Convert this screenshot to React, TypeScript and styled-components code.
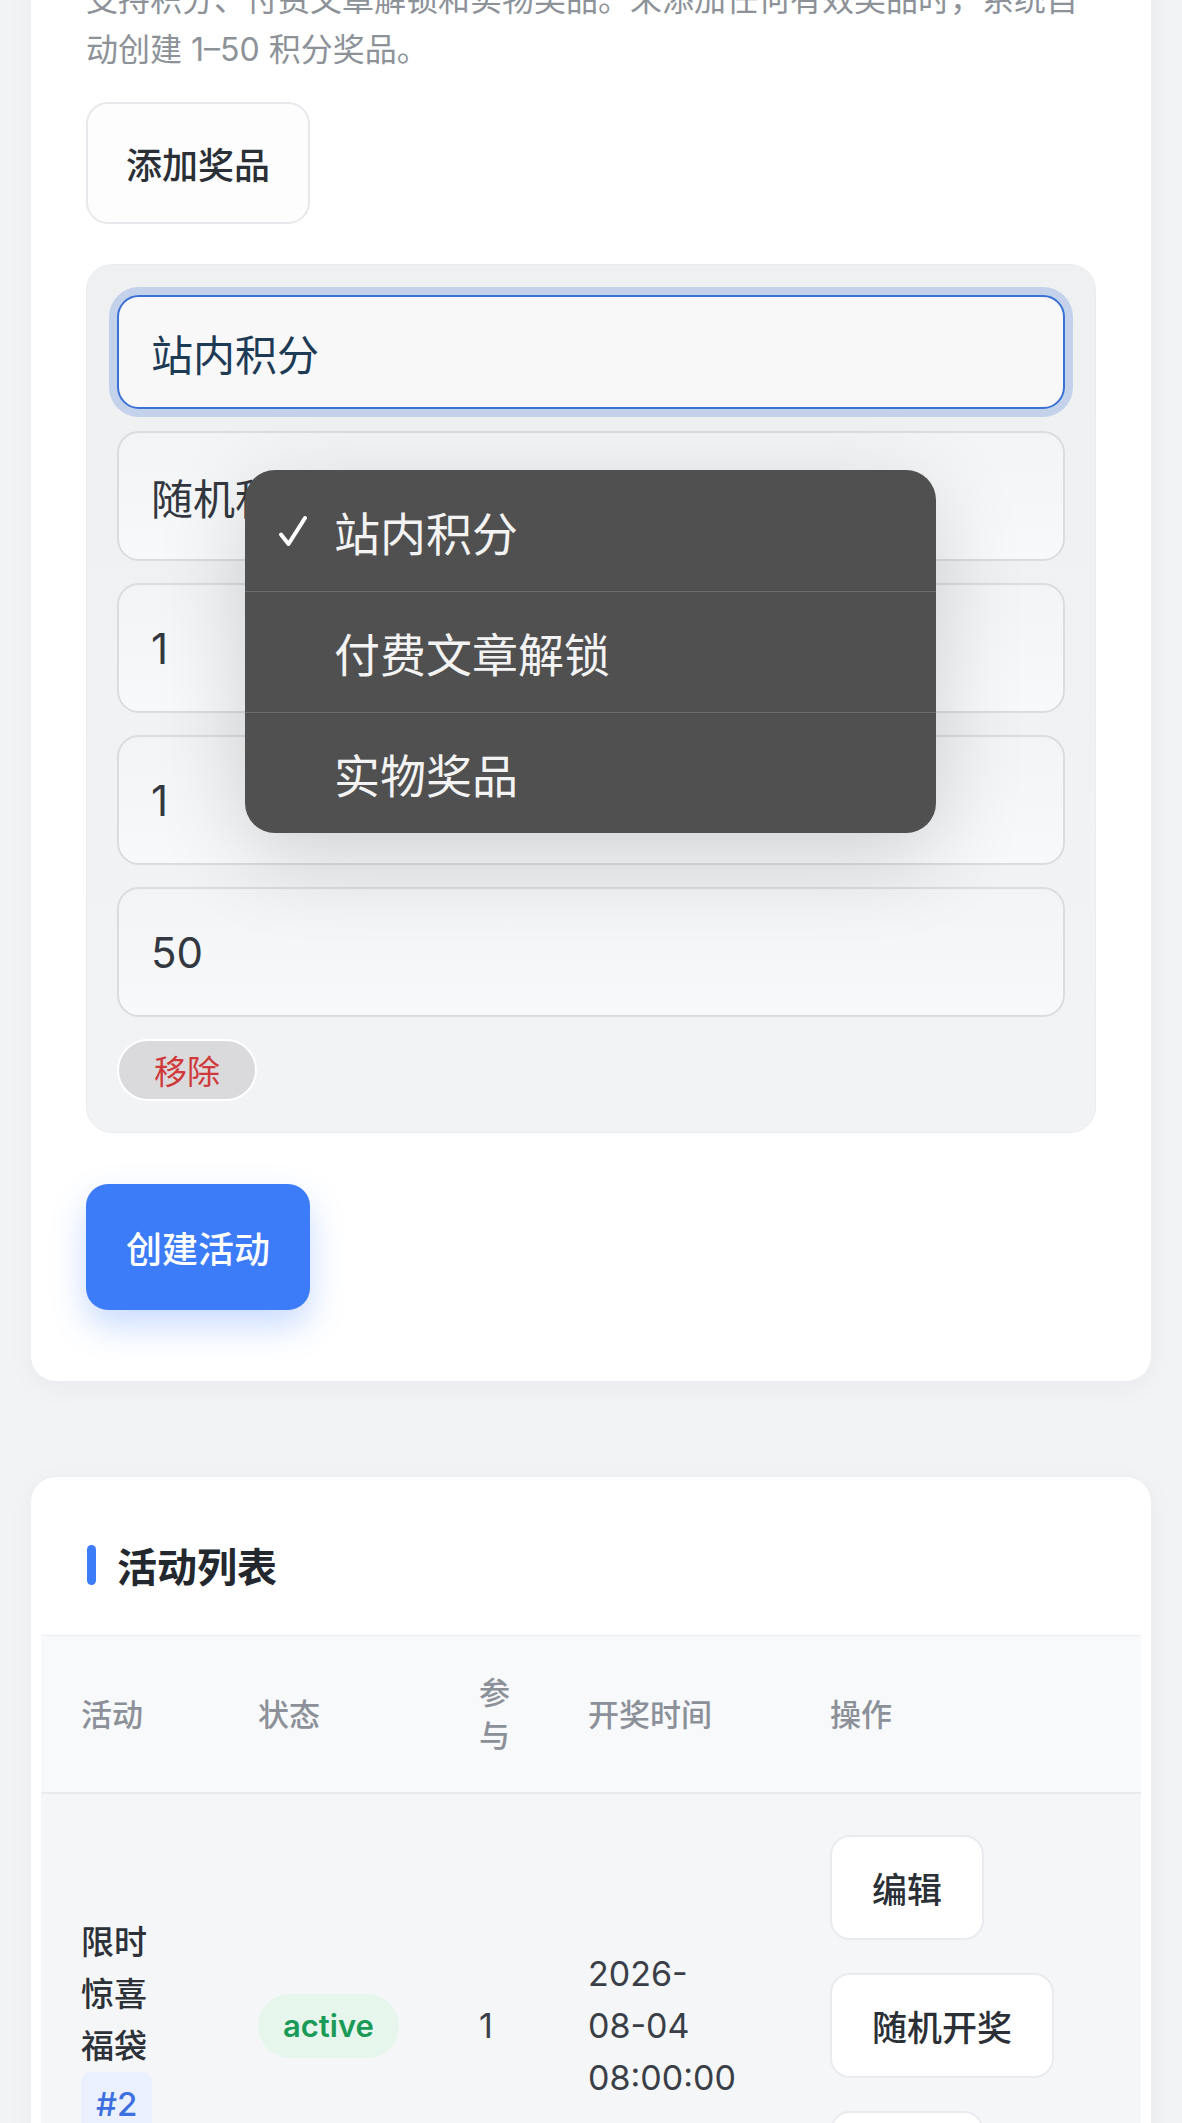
import React from "react";
import styled, { createGlobalStyle } from "styled-components";

const GlobalStyle = createGlobalStyle`
  html, body {
    margin: 0;
    padding: 0;
    background: #f2f3f5;
  }
  body {
    font-family: "Inter", "Noto Sans CJK SC", sans-serif;
    color: #2b2f36;
  }
  * {
    box-sizing: border-box;
  }
`;

const Page = styled.div`
  padding: 0 30px 60px;
  overflow: hidden;
`;

const Card = styled.section<{ $pullUp?: number }>`
  background: #ffffff;
  border-radius: 26px;
  border: 1px solid #eceef1;
  box-shadow: 0 6px 28px rgba(15, 23, 42, 0.04);
  margin-top: ${(p) => (p.$pullUp ? `-${p.$pullUp}px` : "0")};

  & + & {
    margin-top: 94px;
  }
`;

const FormBody = styled.div`
  padding: 55px 55px 71px;
`;

const Description = styled.p`
  margin: 0;
  font-size: 32px;
  line-height: 50px;
  color: #8d9299;
`;

const GhostButton = styled.button`
  display: inline-flex;
  align-items: center;
  justify-content: center;
  height: 122px;
  padding: 0 38px;
  border: 2px solid #e6e8eb;
  border-radius: 22px;
  background: #fdfdfd;
  font-family: inherit;
  font-size: 36px;
  font-weight: 500;
  color: #2b2f36;
`;

const AddRow = styled.div`
  margin-top: 27px;
`;

const PrizePanel = styled.div`
  position: relative;
  margin-top: 40px;
  display: flex;
  flex-direction: column;
  gap: 22px;
  padding: 30px 30px 31px;
  border: 1px solid #eaecef;
  border-radius: 26px;
  background: linear-gradient(180deg, #eef0f2 0%, #f2f3f5 100%);
`;

const SelectBox = styled.div`
  display: flex;
  align-items: center;
  height: 114px;
  padding: 0 32px;
  border: 2px solid #3b70d4;
  border-radius: 22px;
  background: #f8f8f9;
  box-shadow: 0 0 0 8px rgba(59, 112, 212, 0.24);
  font-size: 42px;
  color: #1e3b56;
`;

const Field = styled.input`
  width: 100%;
  height: 130px;
  padding: 0 32px;
  border: 2px solid #d9dce0;
  border-radius: 22px;
  background: linear-gradient(180deg, #f3f4f5 0%, #f8f9fa 100%);
  font-family: inherit;
  font-size: 42px;
  color: #333840;
  outline: none;
`;

const RemoveButton = styled.button`
  align-self: flex-start;
  height: 62px;
  padding: 0 35px;
  border: 2px solid #ffffff;
  border-radius: 31px;
  background: #dadadc;
  font-family: inherit;
  font-size: 33px;
  color: #d0383a;
`;

const Dropdown = styled.ul`
  position: absolute;
  left: 158px;
  top: 205px;
  width: 691px;
  margin: 0;
  padding: 0;
  list-style: none;
  background: #505050;
  border-radius: 30px;
  overflow: hidden;
  box-shadow: 0 24px 90px rgba(0, 0, 0, 0.16);
`;

const DropdownItem = styled.li`
  display: flex;
  align-items: center;
  height: 121px;
  padding-left: 33px;
  font-size: 46px;
  color: #f3f3f3;

  & + & {
    border-top: 1px solid #6c6c6c;
  }
`;

const CheckSlot = styled.span`
  display: inline-flex;
  align-items: center;
  width: 56px;
  height: 40px;
`;

const PrimaryButton = styled.button`
  display: inline-flex;
  align-items: center;
  justify-content: center;
  height: 126px;
  margin-top: 51px;
  padding: 0 40px;
  border: none;
  border-radius: 22px;
  background: #3d7cf8;
  box-shadow: 0 16px 34px rgba(61, 124, 248, 0.28);
  font-family: inherit;
  font-size: 36px;
  font-weight: 500;
  color: #ffffff;
`;

const ListBody = styled.div`
  padding: 60px 56px 0;
`;

const SectionTitle = styled.h2`
  display: flex;
  align-items: center;
  gap: 21px;
  margin: 0;
  height: 56px;
  font-size: 40px;
  font-weight: 600;
  color: #23272e;

  &::before {
    content: "";
    width: 9px;
    height: 40px;
    border-radius: 5px;
    background: #3d7cf8;
  }
`;

const TableWrap = styled.div`
  margin: 42px -46px 0;
`;

const Table = styled.table`
  width: 100%;
  table-layout: fixed;
  border-collapse: collapse;
`;

const Col = styled.col<{ $w?: number }>`
  width: ${(p) => (p.$w ? `${p.$w}px` : "auto")};
`;

const Th = styled.th`
  padding: 35px 36px 35px 40px;
  background: #f8f9fb;
  border-top: 1px solid #eceef1;
  border-bottom: 2px solid #e8eaed;
  text-align: left;
  font-size: 31px;
  font-weight: 500;
  line-height: 43px;
  color: #8b9099;
`;

const Td = styled.td`
  padding: 41px 40px;
  background: #f5f6f8;
  vertical-align: middle;
  font-size: 34px;
  line-height: 52px;
  color: #3a3f47;
`;

const Name = styled.span`
  font-size: 33px;
  font-weight: 500;
  color: #2d3138;
`;

const IdTag = styled.span`
  display: inline-block;
  padding: 4px 15px;
  border-radius: 10px;
  background: #eaf0fe;
  font-size: 33px;
  font-weight: 500;
  line-height: 56px;
  color: #3d6fe0;
`;

const NoWrap = styled.span`
  white-space: nowrap;
`;

const StatusBadge = styled.span`
  display: inline-flex;
  align-items: center;
  height: 64px;
  padding: 0 25px;
  border-radius: 32px;
  background: #e7f6ec;
  font-size: 31px;
  font-weight: 600;
  color: #1a9a57;
`;

const Actions = styled.div`
  display: flex;
  flex-direction: column;
  align-items: flex-start;
  gap: 33px;
`;

const RowButton = styled.button`
  height: 105px;
  padding: 0 40px;
  border: 2px solid #e9ebee;
  border-radius: 20px;
  background: #ffffff;
  font-family: inherit;
  font-size: 35px;
  font-weight: 500;
  color: #2b2f36;
`;

const prizeTypes = ["站内积分", "付费文章解锁", "实物奖品"];

function CheckMark() {
  return (
    <svg width="30" height="32" viewBox="0 0 30 32" fill="none">
      <path
        d="M3 19.5 L10.5 29 L27 3"
        stroke="#ffffff"
        strokeWidth="4"
        strokeLinecap="round"
        strokeLinejoin="round"
      />
    </svg>
  );
}

export default function App() {
  return (
    <>
      <GlobalStyle />
      <Page>
        <Card $pullUp={81}>
          <FormBody>
            <Description>
              支持积分、付费文章解锁和实物奖品。未添加任何有效奖品时，系统自动创建 1–50 积分奖品。
            </Description>
            <AddRow>
              <GhostButton>添加奖品</GhostButton>
            </AddRow>
            <PrizePanel>
              <SelectBox>站内积分</SelectBox>
              <Field readOnly value="随机积分" />
              <Field readOnly value="1" />
              <Field readOnly value="1" />
              <Field readOnly value="50" />
              <RemoveButton>移除</RemoveButton>
              <Dropdown>
                {prizeTypes.map((t, i) => (
                  <DropdownItem key={t}>
                    <CheckSlot>{i === 0 && <CheckMark />}</CheckSlot>
                    {t}
                  </DropdownItem>
                ))}
              </Dropdown>
            </PrizePanel>
            <PrimaryButton>创建活动</PrimaryButton>
          </FormBody>
        </Card>

        <Card>
          <ListBody>
            <SectionTitle>活动列表</SectionTitle>
            <TableWrap>
              <Table>
                <colgroup>
                  <Col $w={177} />
                  <Col $w={221} />
                  <Col $w={109} />
                  <Col $w={242} />
                  <Col />
                </colgroup>
                <thead>
                  <tr>
                    <Th>活动</Th>
                    <Th>状态</Th>
                    <Th>参与</Th>
                    <Th>开奖时间</Th>
                    <Th>操作</Th>
                  </tr>
                </thead>
                <tbody>
                  <tr>
                    <Td>
                      <Name>限时惊喜福袋</Name> <IdTag>#2</IdTag>
                    </Td>
                    <Td>
                      <StatusBadge>active</StatusBadge>
                    </Td>
                    <Td>1</Td>
                    <Td>
                      <NoWrap>2026-</NoWrap>
                      <wbr />
                      <NoWrap>08-04</NoWrap> <NoWrap>08:00:00</NoWrap>
                    </Td>
                    <Td>
                      <Actions>
                        <RowButton>编辑</RowButton>
                        <RowButton>随机开奖</RowButton>
                        <RowButton>删除</RowButton>
                      </Actions>
                    </Td>
                  </tr>
                </tbody>
              </Table>
            </TableWrap>
          </ListBody>
        </Card>
      </Page>
    </>
  );
}
